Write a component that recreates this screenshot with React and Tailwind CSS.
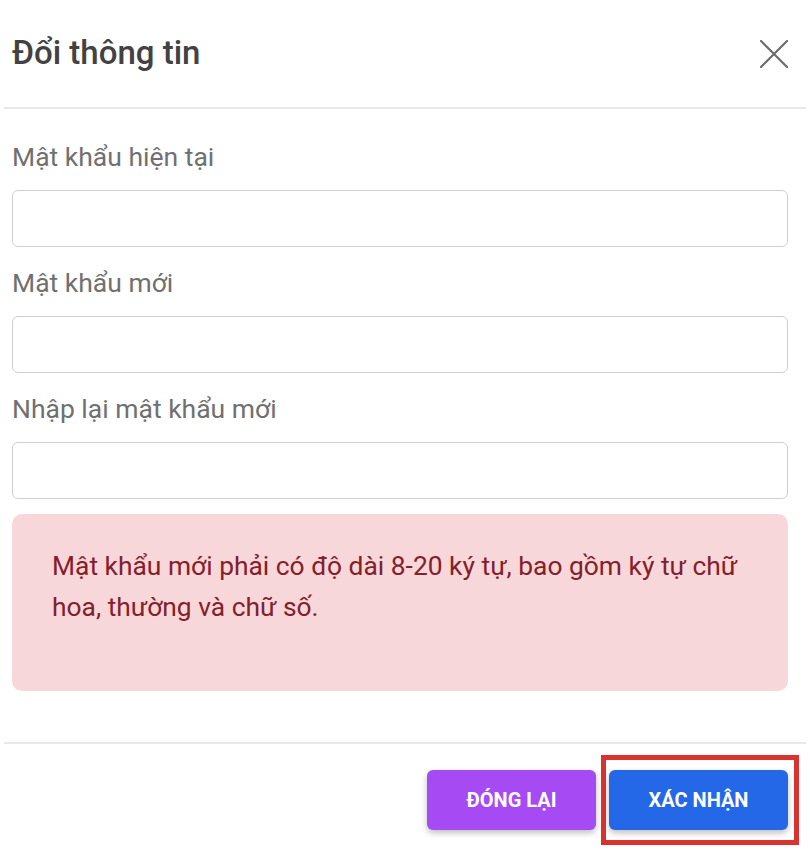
import React from "react";

function CloseIcon() {
  return (
    <svg width="28" height="28" viewBox="0 0 28 28" fill="none">
      <path d="M1 1L27 27M27 1L1 27" stroke="#6b6b6b" strokeWidth="2.2" strokeLinecap="round" />
    </svg>
  );
}

function Field({ label, first }) {
  return (
    <div className={first ? "" : "mt-[16px]"}>
      <div className="text-[26.5px] leading-[39px] text-[#707070]">{label}</div>
      <div className="mt-[14px] h-[57px] rounded-[6px] border border-[#cfcfcf] bg-white"></div>
    </div>
  );
}

export default function App() {
  return (
    <div className="w-[810px] h-[868px] bg-white overflow-hidden" style={{ fontFamily: "Roboto, 'Noto Sans', sans-serif" }}>
      <div className="h-[107px] flex items-center justify-between pl-[12px] pr-[22px]">
        <div className="text-[33px] font-medium text-[#424242] pb-[1px]">Đổi thông tin</div>
        <CloseIcon />
      </div>
      <div className="mx-[4px] h-[2px] bg-[#e8e8e8]"></div>
      <div className="px-[12px] pr-[22px] pt-[28px]">
        <Field label="Mật khẩu hiện tại" first />
        <Field label="Mật khẩu mới" />
        <Field label="Nhập lại mật khẩu mới" />
        <div className="mt-[15px] h-[177px] rounded-[10px] bg-[#f8d7da] pl-[40px] pr-[30px] pt-[32px] text-[26.4px] leading-[41px] text-[#842029]">
          Mật khẩu mới phải có độ dài 8-20 ký tự, bao gồm ký tự chữ hoa, thường và chữ số.
        </div>
      </div>
      <div className="mt-[51px] mx-[4px] h-[2px] bg-[#e8e8e8]"></div>
      <div className="flex justify-end gap-[13px] pr-[22px] pt-[26px]">
        <button className="w-[169px] h-[60px] rounded-[6px] bg-[#a64bf4] text-white font-bold text-[20px] shadow-[0_3px_6px_rgba(0,0,0,0.25)]">
          ĐÓNG LẠI
        </button>
        <div className="relative">
          <div className="absolute left-[-8px] top-[-15px] right-[-11px] bottom-[-15px] border-[5px] border-[#d8332f]"></div>
          <button className="relative w-[179px] h-[60px] rounded-[6px] bg-[#2468e8] text-white font-bold text-[20px] shadow-[0_3px_6px_rgba(0,0,0,0.25)]">
            XÁC NHẬN
          </button>
        </div>
      </div>
    </div>
  );
}
